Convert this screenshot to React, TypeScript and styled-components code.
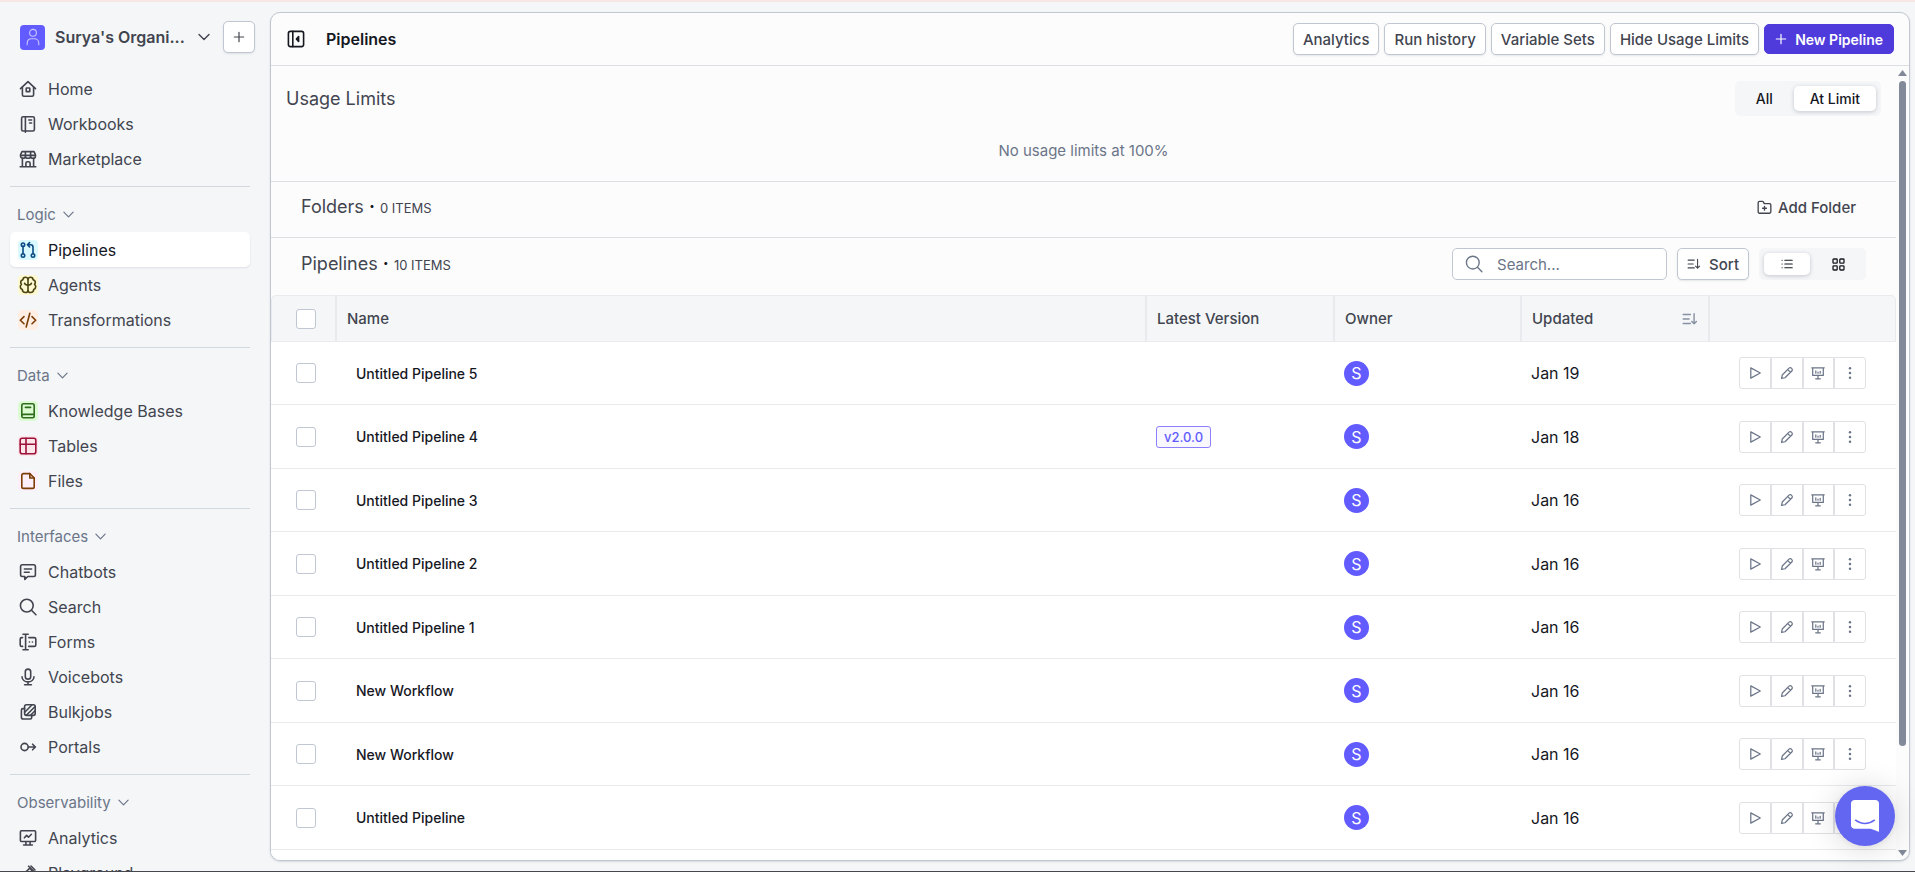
import React from "react";
import styled, { createGlobalStyle, css } from "styled-components";

const color = {
  page: "#f4f6f8",
  card: "#fcfcfc",
  line: "#dcdfe4",
  soft: "#e8eaed",
  control: "#c0c7d2",
  divider: "#d2d8e0",
  text: "#42454f",
  strong: "#16181f",
  muted: "#6b7588",
  brand: "#625bff",
  primary: "#4f3bdb",
};

const Global = createGlobalStyle`
  *, *::before, *::after { box-sizing: border-box; }
  body {
    margin: 0;
    background: ${color.page};
    color: ${color.text};
    font-family: Inter, "Liberation Sans", sans-serif;
    font-size: 16px;
  }
  button, input { font: inherit; color: inherit; }
  button { cursor: pointer; padding: 0; border: 0; background: none; }
  a { color: inherit; text-decoration: none; }
  h1, h2, p, ul { margin: 0; padding: 0; font-weight: 400; }
  ul { list-style: none; }
`;

/* ---------- icons ---------- */

const Glyph = styled.svg<{ $size: number; $weight: number }>`
  display: block;
  flex: none;
  width: ${(p) => p.$size}px;
  height: ${(p) => p.$size}px;
  fill: none;
  stroke: currentColor;
  stroke-width: ${(p) => p.$weight};
  stroke-linecap: round;
  stroke-linejoin: round;
`;

const shapes = {
  home: (
    <>
      <path d="M1.5 8.6 9 1.6l7.5 7" />
      <path d="M3.4 7.2v7.6c0 .9.6 1.5 1.5 1.5h8.2c.9 0 1.5-.6 1.5-1.5V7.2" />
      <rect x="7.2" y="8" width="3.6" height="3.6" rx=".4" />
    </>
  ),
  workbook: (
    <>
      <rect x="2.6" y="1.8" width="12.8" height="14.2" rx="1.6" />
      <path d="M6.4 1.8v15.4M9.8 5h2.8M10.6 8h2" />
    </>
  ),
  store: (
    <>
      <path d="M3 1.6h12l1.4 3v1.6c0 1.2-1 2.1-2.3 2.1-1.4 0-2.5-.9-2.5-2.1 0 1.2-1.1 2.1-2.6 2.1S6.4 7.4 6.4 6.2c0 1.2-1.1 2.1-2.5 2.1-1.3 0-2.3-.9-2.3-2.1V4.6z" />
      <path d="M1.6 5.4h14.8M3.4 8.3v8.3M14.6 8.3v8.3M1.2 16.7h15.6M6.9 16.6v-3.3c0-.9.7-1.6 1.6-1.6h1c.9 0 1.6.7 1.6 1.6v3.3M6.4 2v4M11.6 2v4" />
    </>
  ),
  pipeline: (
    <>
      <circle cx="4" cy="3.7" r="1.7" />
      <circle cx="4" cy="14.5" r="1.7" />
      <circle cx="14" cy="14.5" r="1.7" />
      <path d="M4 5.4v7.4M14 12.8V6.2c0-1.4-.9-2.4-2.3-2.4H8.6M10.6 1.6 8.4 3.8l2.2 2.2" />
    </>
  ),
  brain: (
    <>
      <path d="M9 3.4v11.4M9 3.4C8.7 2 7.7 1.3 6.5 1.3c-1.4 0-2.5 1-2.6 2.4C2.6 4 1.7 5 1.7 6.3c0 .8.3 1.5.8 2-.8.6-1.2 1.4-1.2 2.4 0 1.3.8 2.4 2 2.8.1 1.7 1.4 3 3.1 3 1.4 0 2.4-.7 2.6-1.9" />
      <path d="M9 3.4c.3-1.4 1.3-2.1 2.5-2.1 1.4 0 2.5 1 2.6 2.4 1.3.3 2.2 1.3 2.2 2.6 0 .8-.3 1.5-.8 2 .8.6 1.2 1.4 1.2 2.4 0 1.3-.8 2.4-2 2.8-.1 1.7-1.4 3-3.1 3-1.4 0-2.4-.7-2.6-1.9M5.6 7.2c.3 1.1 1.5 1.9 3.4 1.9s3.1-.8 3.4-1.9" />
    </>
  ),
  code: <path d="M5 5.6 1.3 9.2 5 12.8M13 5.6l3.7 3.6-3.7 3.6M10.8 2.2 7.2 16" />,
  book: (
    <path d="M2.8 14V3.5c0-1 .7-1.7 1.7-1.7h9c1 0 1.7.7 1.7 1.7v10.6c0 1-.7 1.7-1.7 1.7h-9c-1 0-1.7-.8-1.7-1.8 0-1 .7-1.6 1.7-1.6h10.7M6.4 5.4h5.2" />
  ),
  table: (
    <>
      <rect x="1.2" y="1.2" width="15.6" height="15.6" rx="2" />
      <path d="M1.2 7.2h15.6M7 1.2v15.6" />
    </>
  ),
  file: (
    <>
      <path d="M10.8 1.6H4.5c-1 0-1.7.7-1.7 1.7v11.4c0 1 .7 1.7 1.7 1.7h9c1 0 1.7-.7 1.7-1.7V6z" />
      <path d="M10.8 1.6V6h4.4" />
    </>
  ),
  chat: (
    <path d="M3.3 1.7h11.4c1 0 1.7.7 1.7 1.7v8.4c0 1-.7 1.7-1.7 1.7H8.8l-3 2.9v-2.9H3.3c-1 0-1.7-.7-1.7-1.7V3.4c0-1 .7-1.7 1.7-1.7zM5.4 6h7.2M5.4 9.2h4.8" />
  ),
  search: (
    <>
      <circle cx="7.8" cy="7.6" r="6.4" />
      <path d="m12.5 12.3 4.4 4.4" />
    </>
  ),
  form: (
    <>
      <path d="M6.6 1.2v15.6M4 1.2h5.2M4 16.8h5.2M3.6 4.6h-.9c-.9 0-1.5.6-1.5 1.5v5.8c0 .9.6 1.5 1.5 1.5h.9M9.8 4.6h5.5c.9 0 1.5.6 1.5 1.5v5.8c0 .9-.6 1.5-1.5 1.5H9.8" />
      <path d="M10.4 9h.1M13.4 9h.1" />
    </>
  ),
  mic: (
    <>
      <rect x="6.3" y="1.1" width="5.4" height="10" rx="2.7" />
      <path d="M3 8.7c.2 3.1 2.7 5.2 6 5.2s5.8-2.1 6-5.2M9 13.9v2.8M5.6 16.8h6.8" />
    </>
  ),
  bulk: (
    <>
      <rect x="5.6" y="1.8" width="10.6" height="10.6" rx="1.8" />
      <path d="M5.6 5.6H4c-.9 0-1.6.7-1.6 1.6v7c0 1.1.7 1.8 1.8 1.8h7c.9 0 1.5-.7 1.5-1.6v-2M6 9l6.6-6.8M7.6 12l8-8M11.6 12.2l4.4-4.4" />
    </>
  ),
  portal: (
    <>
      <circle cx="5.6" cy="9" r="3.6" />
      <path d="M9.2 9h7M13.6 6.2 16.4 9l-2.8 2.8" />
    </>
  ),
  monitor: (
    <>
      <rect x="1.4" y="1.7" width="15.2" height="10.8" rx="1" />
      <path d="M5.4 8.8 7.6 6.4l1.9 1.8 2.9-2.9M6.9 12.7v3M11.1 12.7v3M4.6 16h8.8" />
    </>
  ),
  pen: <path d="m1.8 16.2 1-4.2L10.6 4.2l3.2 3.2L6 15.2zM9.6 2.2l6.2 6.2M12 2l4 4" />,
  panel: (
    <>
      <rect x="1.4" y="1.4" width="15.2" height="15.2" rx="2" />
      <path d="M5.8 1.4v15.2" />
      <path d="M11.6 6.6v4.8L9.4 9z" fill="currentColor" />
    </>
  ),
  folder: (
    <>
      <path d="M1.4 14.2V3.4c0-1 .6-1.7 1.6-1.7h3.5c.6 0 1 .3 1.3.8l.9 1.8H15c1 0 1.6.7 1.6 1.7v8.2c0 1-.6 1.7-1.6 1.7H3c-1 0-1.6-.7-1.6-1.7z" />
      <path d="M9 7.6v4.6M6.7 9.9h4.6" />
    </>
  ),
  sort: <path d="M1.4 4h8M1.4 9h6.6M1.4 14h8M13.6 3v11.4M11 11.8l2.6 2.6 2.6-2.6" />,
  list: <path d="M5.8 3.4h11M5.8 9h11M5.8 14.6h11M1.6 3.4h.1M1.6 9h.1M1.6 14.6h.1" />,
  grid: (
    <>
      <rect x="1.4" y="1.4" width="5.8" height="5.8" rx="1" />
      <rect x="10.8" y="1.4" width="5.8" height="5.8" rx="1" />
      <rect x="1.4" y="10.8" width="5.8" height="5.8" rx="1" />
      <rect x="10.8" y="10.8" width="5.8" height="5.8" rx="1" />
    </>
  ),
  play: <path d="M3.6 2.4v13.2L15.8 9z" />,
  edit: <path d="m2 16 .9-4.4 8.7-8.8c.9-.9 2.2-.9 3.1 0l.5.5c.9.9.9 2.2 0 3.1l-8.8 8.7zM10 4.6 13.4 8" />,
  board: (
    <path d="M1 2.4h16M2.2 2.4v9.8h13.6V2.4M9 12.2v4M6 16.4h6M6.2 6.2v3M9 8v1.2M11.8 6.8v2.4" />
  ),
  more: (
    <g fill="currentColor" stroke="none">
      <circle cx="9" cy="2.8" r="1.6" />
      <circle cx="9" cy="9" r="1.6" />
      <circle cx="9" cy="15.2" r="1.6" />
    </g>
  ),
  chevron: <path d="m2.6 5.8 6.4 6.4 6.4-6.4" />,
  plus: <path d="M9 2v14M2 9h14" />,
  person: (
    <>
      <circle cx="9" cy="4.8" r="3.4" />
      <path d="M3.2 16.8v-1.6c0-2.6 1.8-4.4 4.4-4.4h2.8c2.6 0 4.4 1.8 4.4 4.4v1.6" />
    </>
  ),
};

type IconName = keyof typeof shapes;

function Icon({ name, size = 18, weight = 1.4 }: { name: IconName; size?: number; weight?: number }) {
  return (
    <Glyph viewBox="0 0 18 18" $size={size} $weight={weight} aria-hidden="true">
      {shapes[name]}
    </Glyph>
  );
}

/* ---------- frame ---------- */

const Shell = styled.div`
  display: flex;
  height: 100vh;
  overflow: hidden;
  border-top: 2px solid #f6e6e4;
  border-bottom: 1px solid #45474c;
`;

const Sidebar = styled.aside`
  flex: none;
  display: flex;
  flex-direction: column;
  width: 270px;
  padding: 19px 20px 0 10px;
  overflow: hidden;
`;

const Card = styled.main`
  flex: 1;
  min-width: 0;
  display: flex;
  flex-direction: column;
  margin: 10px 5px 10px 0;
  overflow: hidden;
  background: ${color.card};
  border: 1px solid ${color.control};
  border-radius: 10px;
  box-shadow: 0 1px 2px rgba(60, 70, 90, 0.16);
`;

/* ---------- controls ---------- */

const outlined = css`
  background: #fff;
  border: 1px solid ${color.control};
  border-radius: 5px;
  box-shadow: 0 1px 2px rgba(60, 70, 90, 0.12);
`;

const Button = styled.button<{ $primary?: boolean }>`
  display: inline-flex;
  align-items: center;
  gap: 8px;
  height: 32px;
  padding: 0 9px;
  font-size: 15px;
  font-weight: 450;
  white-space: nowrap;
  ${outlined}
  ${(p) =>
    p.$primary &&
    css`
      height: 30px;
      padding: 0 10px;
      color: #fff;
      font-size: 14px;
      font-weight: 600;
      background: ${color.primary};
      border-color: ${color.primary};
      box-shadow: none;
    `}
`;

const TextButton = styled.button`
  display: inline-flex;
  align-items: center;
  gap: 6px;
  height: 32px;
  padding: 0 10px;
  font-size: 15px;
  font-weight: 450;
`;

const Segments = styled.div<{ $height: number }>`
  display: flex;
  gap: 5px;
  height: ${(p) => p.$height}px;
  padding: 5px;
  border-radius: 5px;
  background: ${color.page};
`;

const Segment = styled.button<{ $active?: boolean; $wide?: boolean }>`
  display: flex;
  align-items: center;
  justify-content: center;
  min-width: 46px;
  padding: 0 ${(p) => (p.$wide ? 16 : 0)}px;
  border-radius: 5px;
  color: ${color.strong};
  font-size: 14px;
  font-weight: 500;
  ${(p) =>
    p.$active &&
    css`
      background: #fff;
      box-shadow: 0 1px 4px rgba(40, 50, 70, 0.24);
    `}
`;

const Checkbox = styled.input.attrs({ type: "checkbox" })`
  appearance: none;
  display: block;
  width: 20px;
  height: 20px;
  margin: 0;
  background: #fff;
  border: 1px solid ${color.control};
  border-radius: 3px;
`;

/* ---------- sidebar ---------- */

const OrgRow = styled.div`
  display: flex;
  align-items: center;
  height: 32px;
  margin: 0 -5px 18px 10px;
`;

const OrgButton = styled.button`
  flex: 1;
  min-width: 0;
  display: flex;
  align-items: center;
  gap: 10px;
  padding-right: 12px;
  text-align: left;
`;

const OrgAvatar = styled.span`
  display: grid;
  place-items: center;
  flex: none;
  width: 25px;
  height: 25px;
  border-radius: 4px;
  color: #c9c5ff;
  background: ${color.brand};
`;

const OrgName = styled.span`
  flex: 1;
  font-size: 16px;
  font-weight: 600;
  white-space: nowrap;
`;

const AddButton = styled.button`
  display: grid;
  place-items: center;
  width: 32px;
  height: 32px;
  ${outlined}
`;

const Group = styled.section`
  & + & {
    margin-top: 10px;
    padding-top: 10px;
    border-top: 1px solid ${color.divider};
  }
`;

const GroupLabel = styled.button`
  display: flex;
  align-items: center;
  gap: 6px;
  height: 35px;
  padding-left: 7px;
  font-size: 15px;
  color: ${color.muted};
`;

const NavLink = styled.a<{ $active?: boolean }>`
  display: flex;
  align-items: center;
  gap: 10px;
  height: 35px;
  padding-left: 8px;
  border-radius: 5px;
  font-size: 16px;
  ${(p) =>
    p.$active &&
    css`
      color: ${color.strong};
      background: #fff;
      box-shadow: 0 1px 2px rgba(60, 70, 90, 0.12);
    `}
`;

const IconTile = styled.span<{ $fg?: string; $bg?: string }>`
  display: grid;
  place-items: center;
  flex: none;
  width: 20px;
  height: 20px;
  border-radius: 4px;
  color: ${(p) => p.$fg ?? color.text};
  background: ${(p) => p.$bg ?? "transparent"};
`;

type NavItem = { label: string; icon: IconName; fg?: string; bg?: string; active?: boolean };

const groups: { label?: string; items: NavItem[] }[] = [
  {
    items: [
      { label: "Home", icon: "home" },
      { label: "Workbooks", icon: "workbook" },
      { label: "Marketplace", icon: "store" },
    ],
  },
  {
    label: "Logic",
    items: [
      { label: "Pipelines", icon: "pipeline", fg: "#0b4a85", bg: "#d9f9ff", active: true },
      { label: "Agents", icon: "brain", fg: "#4a4312", bg: "#fdf8cf" },
      { label: "Transformations", icon: "code", fg: "#7a3d05", bg: "#ffeee4" },
    ],
  },
  {
    label: "Data",
    items: [
      { label: "Knowledge Bases", icon: "book", fg: "#2f6b1c", bg: "#dcfbd2" },
      { label: "Tables", icon: "table", fg: "#9c1239", bg: "#fde6ea" },
      { label: "Files", icon: "file", fg: "#7a3d05", bg: "#fdeefa" },
    ],
  },
  {
    label: "Interfaces",
    items: [
      { label: "Chatbots", icon: "chat" },
      { label: "Search", icon: "search" },
      { label: "Forms", icon: "form" },
      { label: "Voicebots", icon: "mic" },
      { label: "Bulkjobs", icon: "bulk" },
      { label: "Portals", icon: "portal" },
    ],
  },
  {
    label: "Observability",
    items: [
      { label: "Analytics", icon: "monitor" },
      { label: "Playground", icon: "pen" },
    ],
  },
];

/* ---------- content ---------- */

const Header = styled.header`
  flex: none;
  display: flex;
  align-items: center;
  gap: 5px;
  height: 53px;
  padding: 0 15px 0 16px;
  border-bottom: 1px solid ${color.line};
`;

const PanelToggle = styled.button`
  color: ${color.strong};
`;

const Title = styled.h1`
  flex: 1;
  margin-left: 16px;
  font-size: 16px;
  font-weight: 600;
  color: ${color.strong};
`;

const Scroller = styled.div`
  flex: 1;
  min-height: 0;
  display: flex;
`;

const Content = styled.div`
  flex: 1;
  min-width: 0;
  display: flex;
  flex-direction: column;
  overflow: hidden;
`;

const Usage = styled.section`
  padding: 15px 15px 20px;
  border-bottom: 1px solid ${color.line};
`;

const UsageHead = styled.div`
  display: flex;
  align-items: center;
  justify-content: space-between;
`;

const Heading = styled.h2`
  font-size: 18px;
  line-height: 24px;
`;

const Count = styled.small`
  font-size: 13px;
`;

const Dot = styled.span`
  font-weight: 700;
  color: ${color.strong};
`;

const Empty = styled.p`
  margin-top: 25px;
  font-size: 15px;
  line-height: 20px;
  text-align: center;
  color: ${color.muted};
`;

const Bar = styled.section<{ $lined?: boolean }>`
  display: flex;
  align-items: center;
  justify-content: space-between;
  padding: ${(p) => (p.$lined ? "9px 30px 14px" : "10px 30px 15px")};
  border-bottom: ${(p) => (p.$lined ? `1px solid ${color.line}` : "0")};
`;

const Tools = styled.div`
  display: flex;
  gap: 10px;
`;

const SearchBox = styled.label`
  display: flex;
  align-items: center;
  gap: 14px;
  width: 215px;
  height: 32px;
  padding: 0 12px;
  color: ${color.muted};
  background: #fff;
  border: 1px solid ${color.control};
  border-radius: 5px;
`;

const SearchInput = styled.input`
  flex: 1;
  min-width: 0;
  padding: 0;
  border: 0;
  outline: 0;
  background: none;
  font-size: 15px;
  &::placeholder {
    color: ${color.muted};
    opacity: 1;
  }
`;

/* ---------- table ---------- */

const TableArea = styled.div`
  flex: 1;
  background: linear-gradient(${color.card} 8px, #fff 8px);
`;

const Table = styled.table`
  width: 100%;
  table-layout: fixed;
  border-collapse: separate;
  border-spacing: 0;
`;

const Th = styled.th<{ $check?: boolean }>`
  height: 47px;
  padding: 0 ${(p) => (p.$check ? 24 : 10)}px;
  text-align: left;
  font-size: 15px;
  font-weight: 450;
  background: ${color.page};
  border: 1px solid ${color.soft};
  &:first-child { border-top-left-radius: 5px; }
  &:last-child { border-top-right-radius: 5px; }
`;

const SortableHead = styled.div`
  display: flex;
  align-items: center;
  justify-content: space-between;
`;

const SortButton = styled.button`
  color: #8791a3;
`;

const Row = styled.tr`
  height: 63px;
  background: #fff;
  &:nth-child(even) { height: 64px; }
`;

const Td = styled.td<{ $pad?: number }>`
  padding: 0 ${(p) => p.$pad ?? 10}px;
  border-bottom: 1px solid ${color.soft};
  font-size: 16px;
  color: ${color.strong};
`;

const NameLink = styled.a`
  display: block;
  font-size: 14px;
  font-weight: 500;
`;

const Tag = styled.span`
  display: inline-flex;
  align-items: center;
  height: 22px;
  padding: 0 7px;
  font-size: 13px;
  font-weight: 500;
  color: ${color.brand};
  background: #f9f8ff;
  border: 1px solid #8d80ff;
  border-radius: 3px;
  vertical-align: middle;
`;

const Owner = styled.span`
  display: grid;
  place-items: center;
  width: 25px;
  height: 25px;
  border-radius: 50%;
  font-size: 16px;
  color: #fff;
  background: ${color.brand};
`;

const Actions = styled.div`
  display: flex;
  justify-content: flex-end;
`;

const Action = styled.button`
  display: grid;
  place-items: center;
  width: 32px;
  height: 32px;
  color: ${color.muted};
  background: #fff;
  border: 1px solid #dfe1e4;
  &:first-child { border-radius: 3px 0 0 3px; }
  &:last-child { border-radius: 0 3px 3px 0; }
`;

/* ---------- scrollbar and chat launcher ---------- */

const Scrollbar = styled.div`
  flex: none;
  display: flex;
  flex-direction: column;
  align-items: center;
  gap: 5px;
  width: 13px;
  padding: 4px 0;
  color: #828998;
`;

const Track = styled.div`
  flex: 1;
  display: flex;
  width: 7px;
`;

const Thumb = styled.div`
  width: 100%;
  height: 87%;
  border-radius: 4px;
  background: currentColor;
`;

const Launcher = styled.button`
  position: fixed;
  right: 20px;
  bottom: 26px;
  display: grid;
  place-items: center;
  width: 60px;
  height: 60px;
  border-radius: 50%;
  background: #6366f1;
  box-shadow: 0 1px 6px rgba(0, 0, 0, 0.08), 0 2px 32px rgba(0, 0, 0, 0.16);
`;

const rows = [
  { name: "Untitled Pipeline 5", updated: "Jan 19" },
  { name: "Untitled Pipeline 4", updated: "Jan 18", version: "v2.0.0" },
  { name: "Untitled Pipeline 3", updated: "Jan 16" },
  { name: "Untitled Pipeline 2", updated: "Jan 16" },
  { name: "Untitled Pipeline 1", updated: "Jan 16" },
  { name: "New Workflow", updated: "Jan 16" },
  { name: "New Workflow", updated: "Jan 16" },
  { name: "Untitled Pipeline", updated: "Jan 16" },
];

const actions: { icon: IconName; label: string }[] = [
  { icon: "play", label: "Run" },
  { icon: "edit", label: "Edit" },
  { icon: "board", label: "Analytics" },
  { icon: "more", label: "More" },
];

function SectionTitle({ title, count }: { title: string; count: string }) {
  return (
    <Heading>
      {title} <Dot>·</Dot> <Count>{count}</Count>
    </Heading>
  );
}

export default function App() {
  return (
    <>
      <Global />
      <Shell>
        <Sidebar>
          <OrgRow>
            <OrgButton>
              <OrgAvatar>
                <Icon name="person" weight={1.1} />
              </OrgAvatar>
              <OrgName>Surya's Organi...</OrgName>
              <Icon name="chevron" size={14} weight={1.8} />
            </OrgButton>
            <AddButton aria-label="Add">
              <Icon name="plus" size={12} weight={1.8} />
            </AddButton>
          </OrgRow>
          <nav>
            {groups.map((group, i) => (
              <Group key={i}>
                {group.label && (
                  <GroupLabel>
                    {group.label}
                    <Icon name="chevron" size={13} weight={1.6} />
                  </GroupLabel>
                )}
                <ul>
                  {group.items.map((item) => (
                    <li key={item.label}>
                      <NavLink href="#" $active={item.active}>
                        <IconTile $fg={item.fg} $bg={item.bg}>
                          <Icon name={item.icon} weight={1.6} />
                        </IconTile>
                        {item.label}
                      </NavLink>
                    </li>
                  ))}
                </ul>
              </Group>
            ))}
          </nav>
        </Sidebar>

        <Card>
          <Header>
            <PanelToggle aria-label="Collapse sidebar">
              <Icon name="panel" weight={1.6} />
            </PanelToggle>
            <Title>Pipelines</Title>
            <Button>Analytics</Button>
            <Button>Run history</Button>
            <Button>Variable Sets</Button>
            <Button>Hide Usage Limits</Button>
            <Button $primary>
              <Icon name="plus" size={12} weight={1.8} />
              New Pipeline
            </Button>
          </Header>

          <Scroller>
            <Content>
              <Usage>
                <UsageHead>
                  <Heading>Usage Limits</Heading>
                  <Segments $height={35}>
                    <Segment $wide>All</Segment>
                    <Segment $wide $active>
                      At Limit
                    </Segment>
                  </Segments>
                </UsageHead>
                <Empty>No usage limits at 100%</Empty>
              </Usage>

              <Bar $lined>
                <SectionTitle title="Folders" count="0 ITEMS" />
                <TextButton>
                  <Icon name="folder" size={15} weight={1.6} />
                  Add Folder
                </TextButton>
              </Bar>

              <Bar>
                <SectionTitle title="Pipelines" count="10 ITEMS" />
                <Tools>
                  <SearchBox>
                    <Icon name="search" />
                    <SearchInput type="text" placeholder="Search..." aria-label="Search" />
                  </SearchBox>
                  <Button>
                    <Icon name="sort" size={14} />
                    Sort
                  </Button>
                  <Segments $height={32}>
                    <Segment $active aria-label="List view">
                      <Icon name="list" size={12} weight={1.8} />
                    </Segment>
                    <Segment aria-label="Grid view">
                      <Icon name="grid" size={13} weight={1.8} />
                    </Segment>
                  </Segments>
                </Tools>
              </Bar>

              <TableArea>
                <Table>
                  <colgroup>
                    <col width="65" />
                    <col />
                    <col width="188" />
                    <col width="187" />
                    <col width="188" />
                    <col width="187" />
                  </colgroup>
                  <thead>
                    <tr>
                      <Th $check>
                        <Checkbox aria-label="Select all" />
                      </Th>
                      <Th>Name</Th>
                      <Th>Latest Version</Th>
                      <Th>Owner</Th>
                      <Th>
                        <SortableHead>
                          Updated
                          <SortButton aria-label="Sort by updated">
                            <Icon name="sort" size={16} weight={1.6} />
                          </SortButton>
                        </SortableHead>
                      </Th>
                      <Th />
                    </tr>
                  </thead>
                  <tbody>
                    {rows.map((row, i) => (
                      <Row key={i}>
                        <Td $pad={25}>
                          <Checkbox aria-label={`Select ${row.name}`} />
                        </Td>
                        <Td $pad={20}>
                          <NameLink href="#">{row.name}</NameLink>
                        </Td>
                        <Td>{row.version && <Tag>{row.version}</Tag>}</Td>
                        <Td>
                          <Owner>S</Owner>
                        </Td>
                        <Td>{row.updated}</Td>
                        <Td $pad={30}>
                          <Actions>
                            {actions.map((action) => (
                              <Action key={action.icon} aria-label={action.label}>
                                <Icon name={action.icon} size={14} weight={1.6} />
                              </Action>
                            ))}
                          </Actions>
                        </Td>
                      </Row>
                    ))}
                  </tbody>
                </Table>
              </TableArea>
            </Content>

            <Scrollbar aria-hidden="true">
              <svg width="9" height="6" viewBox="0 0 9 6" fill="currentColor">
                <path d="M4.5 0 9 6H0z" />
              </svg>
              <Track>
                <Thumb />
              </Track>
              <svg width="9" height="6" viewBox="0 0 9 6" fill="currentColor">
                <path d="M4.5 6 0 0h9z" />
              </svg>
            </Scrollbar>
          </Scroller>
        </Card>
      </Shell>

      <Launcher aria-label="Open chat">
        <svg width="28" height="32" viewBox="0 0 28 32" aria-hidden="true">
          <path
            fill="#fff"
            d="M28 32s-4.7-1.9-8.4-3.2H3.6c-2 0-3.6-1.5-3.6-3.5V3.5C0 1.5 1.6 0 3.6 0h20.8C26.4 0 28 1.5 28 3.5z"
          />
          <path d="M4.6 20.2c5.4 4.4 13.4 4.4 18.8 0" fill="none" stroke="#6366f1" strokeWidth="1.5" strokeLinecap="round" />
        </svg>
      </Launcher>
    </>
  );
}
